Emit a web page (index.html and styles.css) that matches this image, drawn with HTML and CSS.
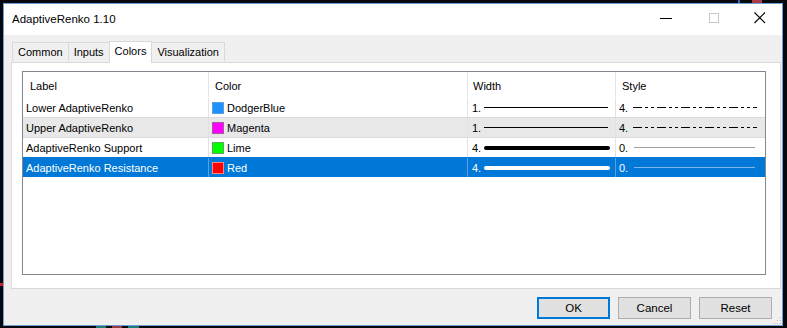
FILE: index.html
```html
<!DOCTYPE html>
<html>
<head>
<meta charset="utf-8">
<title>AdaptiveRenko 1.10</title>
<link rel="stylesheet" href="styles.css">
</head>
<body>
<div class="desk-bit bit-red-top"></div>
<div class="desk-bit bit-blue-top"></div>
<div class="desk-bit bit-red-left"></div>
<div class="desk-bit bit-teal1"></div>
<div class="desk-bit bit-red-bot"></div>
<div class="desk-bit bit-teal2"></div>
<div class="window">
  <div class="titlebar">
    <span class="title">AdaptiveRenko 1.10</span>
    <div class="caption-buttons">
      <span class="cap cap-min"><svg width="14" height="14" viewBox="0 0 14 14"><line x1="1" y1="7.5" x2="13" y2="7.5" stroke="#000" stroke-width="1"/></svg></span>
      <span class="cap cap-max"><svg width="14" height="14" viewBox="0 0 14 14"><rect x="2.5" y="2.5" width="9" height="9" fill="none" stroke="#c8c8c8" stroke-width="1"/></svg></span>
      <span class="cap cap-close"><svg width="14" height="14" viewBox="0 0 14 14"><path d="M1.5 1.5 L12 12 M12 1.5 L1.5 12" stroke="#000" stroke-width="1.1" fill="none"/></svg></span>
    </div>
  </div>
  <div class="client">
    <div class="tabs">
      <div class="tab">Common</div>
      <div class="tab">Inputs</div>
      <div class="tab tab-active">Colors</div>
      <div class="tab">Visualization</div>
    </div>
    <div class="panel">
      <div class="listview">
        <div class="lv-row lv-header">
          <div class="cell c-label">Label</div>
          <div class="cell c-color">Color</div>
          <div class="cell c-width">Width</div>
          <div class="cell c-style">Style</div>
        </div>
        <div class="lv-row">
          <div class="cell c-label">Lower AdaptiveRenko</div>
          <div class="cell c-color"><span class="swatch sw-blue"></span>DodgerBlue</div>
          <div class="cell c-width"><span class="num">1.</span><span class="wline w1"></span></div>
          <div class="cell c-style"><span class="num">4.</span><svg class="sline" width="124" height="3" viewBox="0 0 124 3"><line x1="0" y1="1.5" x2="124" y2="1.5" stroke="#000" stroke-width="1" stroke-dasharray="9 3 3 3 3 3"/></svg></div>
        </div>
        <div class="lv-row lv-alt">
          <div class="cell c-label">Upper AdaptiveRenko</div>
          <div class="cell c-color"><span class="swatch sw-magenta"></span>Magenta</div>
          <div class="cell c-width"><span class="num">1.</span><span class="wline w1"></span></div>
          <div class="cell c-style"><span class="num">4.</span><svg class="sline" width="124" height="3" viewBox="0 0 124 3"><line x1="0" y1="1.5" x2="124" y2="1.5" stroke="#000" stroke-width="1" stroke-dasharray="9 3 3 3 3 3"/></svg></div>
        </div>
        <div class="lv-row">
          <div class="cell c-label">AdaptiveRenko Support</div>
          <div class="cell c-color"><span class="swatch sw-lime"></span>Lime</div>
          <div class="cell c-width"><span class="num">4.</span><span class="wline w4"></span></div>
          <div class="cell c-style"><span class="num">0.</span><span class="thin"></span></div>
        </div>
        <div class="lv-row lv-sel">
          <div class="cell c-label">AdaptiveRenko Resistance</div>
          <div class="cell c-color"><span class="swatch sw-red"></span>Red</div>
          <div class="cell c-width"><span class="num">4.</span><span class="wline w4"></span></div>
          <div class="cell c-style"><span class="num">0.</span><span class="thin"></span></div>
        </div>
      </div>
    </div>
    <div class="buttons">
      <button class="btn btn-default">OK</button>
      <button class="btn">Cancel</button>
      <button class="btn">Reset</button>
    </div>
    <div class="grip"></div>
  </div>
</div>
</body>
</html>
```
FILE: styles.css
```css
* { box-sizing: border-box; }
html, body { margin: 0; padding: 0; }
body {
  width: 787px;
  height: 328px;
  background: #05080c;
  font-family: "Liberation Sans", Arial, sans-serif;
  font-size: 11px;
  color: #000;
  padding: 3px 0 0 3px;
  position: relative;
  overflow: hidden;
}
.desk-bit { position: absolute; }
.bit-red-top { left: 752px; top: 0; width: 10px; height: 3px; background: #b03a48; }
.bit-blue-top { left: 738px; top: 0; width: 2px; height: 3px; background: #2a6cc0; }
.bit-red-left { left: 0; top: 283px; width: 3px; height: 3px; background: #d02020; }
.bit-teal1 { left: 96px; top: 325px; width: 10px; height: 3px; background: #1f7a78; }
.bit-red-bot { left: 112px; top: 325px; width: 10px; height: 3px; background: #9a3a40; }
.bit-teal2 { left: 128px; top: 325px; width: 11px; height: 3px; background: #1f7a78; }

.window {
  width: 780px;
  height: 323px;
  border: 1px solid #6d9fd2;
  background: #f0f0f0;
  display: flex;
  flex-direction: column;
  position: relative;
}
.titlebar {
  height: 31px;
  background: #fff;
  display: flex;
  align-items: center;
  justify-content: space-between;
  padding-left: 8px;
  flex: none;
}
.title { font-size: 11.5px; margin-top: -1px; }
.caption-buttons { display: flex; height: 100%; }
.cap {
  width: 48px;
  display: flex;
  align-items: center;
  justify-content: center;
  margin-top: -4px;
}
.cap-close { width: 44px; }

.client {
  flex: 1;
  display: flex;
  flex-direction: column;
  padding: 6px 0 0 7px;
  position: relative;
}
.tabs {
  display: flex;
  height: 21px;
  align-items: flex-end;
  padding-left: 1px;
  position: relative;
  z-index: 1;
}
.tab {
  height: 19px;
  border: 1px solid #d9d9d9;
  border-bottom: none;
  border-right: none;
  background: #f0f0f0;
  padding: 0 5px;
  line-height: 18px;
  margin-bottom: 1px;
}
.tab:nth-child(4) { border-right: 1px solid #d9d9d9; }
.tab-active {
  height: 22px;
  background: #fff;
  border-right: 1px solid #d9d9d9;
  margin-bottom: -1px;
  line-height: 19px;
}
.tab-active + .tab { border-left: none; }
.panel {
  width: 770px;
  height: 227px;
  border: 1px solid #d9d9d9;
  background: #fff;
  padding: 8px 0 0 10px;
}
.listview {
  width: 744px;
  height: 204px;
  border: 1px solid #828790;
  background: #fff;
}
.lv-row {
  display: flex;
  height: 20px;
  align-items: stretch;
}
.lv-header { height: 25px; }
.cell {
  display: flex;
  align-items: center;
  border-right: 1px solid #e2e2e2;
  white-space: nowrap;
  overflow: hidden;
}
.lv-header .cell { border-right-color: #e5e5e5; padding-top: 2px; }
.c-label { width: 186px; padding-left: 3px; }
.c-color { width: 259px; padding-left: 3px; }
.c-width { width: 148px; padding-left: 4px; }
.c-style { flex: 1; padding-left: 3px; border-right: none; }
.lv-header .c-label { padding-left: 7px; }
.lv-header .c-color { padding-left: 6px; }
.lv-header .c-width { padding-left: 5px; }
.lv-header .c-style { padding-left: 6px; }

.lv-row:not(.lv-header) { border-top: 1px solid transparent; }
.lv-row + .lv-row + .lv-row { border-top-color: #dcdcdc; }
.lv-alt { background: #e8e8e8; }
.lv-sel { background: #0078d7; color: #fff; border-top-color: #0078d7 !important; }
.lv-sel .cell { border-right-color: #5a9fe0; }
.lv-sel .c-style { border-right: none; }

.swatch {
  width: 12px;
  height: 12px;
  border: 1px solid #8a8a8a;
  margin-right: 3px;
  flex: none;
}
.sw-blue { background: #1e90ff; border-color: #5e9fd6; }
.sw-magenta { background: #ff00ff; border-color: #a060a0; }
.sw-lime { background: #00ff00; border-color: #60a060; }
.sw-red { background: #ff0000; border-color: #ff8080; }

.num { width: 12px; flex: none; }
.wline { display: block; height: 1px; background: #000; width: 124px; }
.w4 { height: 4px; width: 126px; border-radius: 2px; }
.lv-sel .wline { background: #fff; }
.sline { display: block; margin-left: 2px; }
.thin { display: block; height: 1px; width: 121px; background: #a0a0a0; margin-left: 3px; }
.lv-sel .thin { background: #7fb5e8; }

.buttons {
  display: flex;
  justify-content: flex-end;
  gap: 8px;
  padding: 8px 10px 0 0;
}
.btn {
  width: 73px;
  height: 22px;
  background: #e1e1e1;
  border: 1px solid #adadad;
  font-family: "Liberation Sans", Arial, sans-serif;
  font-size: 11.5px;
  color: #000;
  padding: 0;
  margin: 0;
}
.btn-default { border: 2px solid #0078d7; }
.grip {
  position: absolute;
  right: 1px;
  bottom: 1px;
  width: 8px;
  height: 8px;
  background-image: radial-gradient(circle, #b8b8b8 0.8px, transparent 1px);
  background-size: 3px 3px;
  clip-path: polygon(100% 0, 100% 100%, 0 100%);
}
```
